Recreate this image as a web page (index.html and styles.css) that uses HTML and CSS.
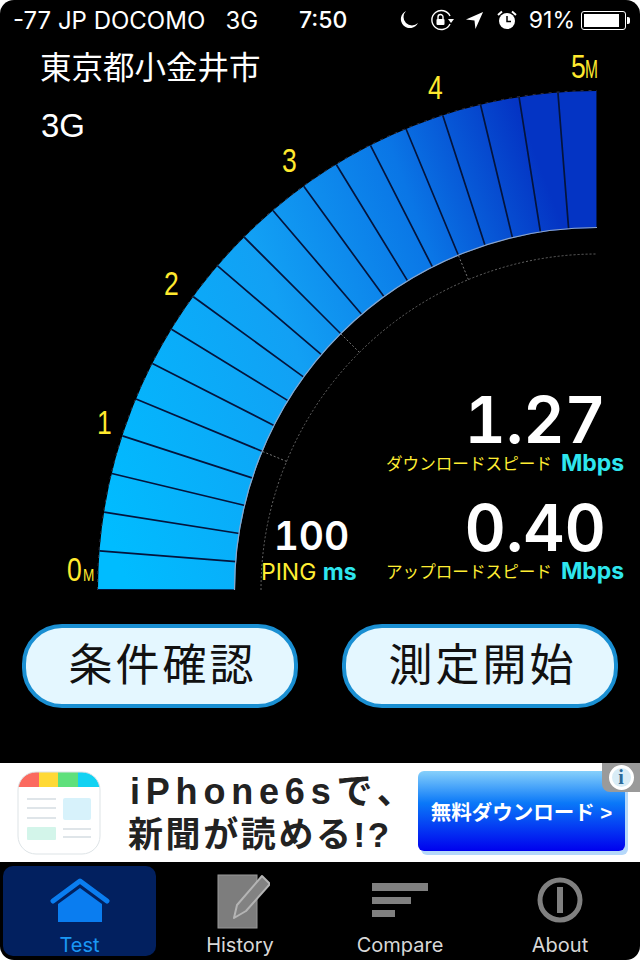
FILE: index.html
```html
<!DOCTYPE html>
<html>
<head>
  <title>Speed Test</title>
  <link rel="stylesheet" href="styles.css">
</head>
<body>
  <div class="screen">
    <div class="status-bar">
      <div class="carrier">-77 JP DOCOMO&nbsp;&nbsp;&nbsp;3G</div>
      <div class="clock">7:50</div>
      <div class="status-icons">
        <svg class="status-icon moon" viewBox="0 0 20 20"><path d="M7 1a9 9 0 1 0 12 12A8 8 0 0 1 7 1z" fill="#fff"/></svg>
        <svg class="status-icon rotate" viewBox="0 0 24 22"><path d="M20 7A9.5 9.5 0 1 0 20 15" fill="none" stroke="#fff" stroke-width="1.4"/><path d="M18 10h6l-3 4z" fill="#fff"/><rect x="6.500" y="10" width="8" height="6" rx="1" fill="#fff"/><path d="M8 10V8a2.500 2.500 0 0 1 5 0v2" fill="none" stroke="#fff" stroke-width="1.400"/></svg>
        <svg class="status-icon arrow" viewBox="0 0 20 20"><path d="M19 1L1 9l9 1 1 9z" fill="#fff"/></svg>
        <svg class="status-icon alarm" viewBox="0 0 20 20"><circle cx="10" cy="11" r="8" fill="#fff"/><path d="M10 6v5.500h4" fill="none" stroke="#000" stroke-width="1.500"/><path d="M1 5l4-3.500M19 5l-4-3.500" stroke="#fff" stroke-width="2"/></svg>
        <span class="battery-text">91%</span>
        <div class="battery"><div class="battery-fill"></div></div>
        <div class="battery-tip"></div>
      </div>
    </div>

    <div class="main">
      <svg class="gauge" viewBox="0 40 640 560">
        <defs>
          <linearGradient id="band" gradientUnits="userSpaceOnUse" x1="110" y1="540" x2="610" y2="350">
            <stop offset="0" stop-color="#00bcff"/>
            <stop offset="0.45" stop-color="#12a0f4"/>
            <stop offset="0.75" stop-color="#0a76e6"/>
            <stop offset="1" stop-color="#0434c4"/>
          </linearGradient>
        </defs>
        <path d="M166.500 590A430.500 430.500 0 0 1 597 159.500" fill="none" stroke="url(#band)" stroke-width="137"/>
        <path d="M166.500 590A430.500 430.500 0 0 1 597 159.500" pathLength="20" fill="none" stroke="#04143c" stroke-width="137" stroke-dasharray="0.05 0.95" stroke-dashoffset="-0.975"/>
        <path d="M234.500 590A362.500 362.500 0 0 1 597 227.500" fill="none" stroke="#8fa6c8" stroke-width="1.200"/>
        <path d="M261 590A336 336 0 0 1 597 254" fill="none" stroke="#666" stroke-width="1" stroke-dasharray="2 2"/>
        <path d="M97.500 590A499.500 499.500 0 0 1 597 90.500" fill="none" stroke="#334" stroke-width="1" stroke-dasharray="3 5"/>
        <path d="M262.600 451.500L286.600 461.400M341 334L359.400 352.400M458.500 255.600L468.400 279.600" stroke="#777" stroke-width="1" stroke-dasharray="2 2"/>
        <g class="gauge-labels">
          <text transform="translate(67 581) scale(.78 1)">0</text>
          <text class="unit" transform="translate(83 581) scale(.8 1)">M</text>
          <text transform="translate(97 434) scale(.78 1)">1</text>
          <text transform="translate(164 295) scale(.78 1)">2</text>
          <text transform="translate(282 172) scale(.78 1)">3</text>
          <text transform="translate(428 99) scale(.78 1)">4</text>
          <text transform="translate(571 78) scale(.78 1)">5</text>
          <text class="unit-large" transform="translate(585 78) scale(.62 1)">M</text>
        </g>
      </svg>

      <div class="location">
        <div class="location-line">東京都小金井市</div>
        <div class="location-line location-network">3G</div>
      </div>

      <div class="readouts">
        <div class="ping">
          <div class="ping-value">100</div>
          <div class="ping-label">PING <b>ms</b></div>
        </div>
        <div class="speeds">
          <div class="speed">
            <div class="speed-value">1.27</div>
            <div class="speed-label"><span>ダウンロードスピード</span><b>Mbps</b></div>
          </div>
          <div class="speed">
            <div class="speed-value">0.40</div>
            <div class="speed-label"><span>アップロードスピード</span><b>Mbps</b></div>
          </div>
        </div>
      </div>

      <div class="buttons">
        <div class="big-button">条件確認</div>
        <div class="big-button">測定開始</div>
      </div>
    </div>

    <div class="ad">
      <svg class="ad-icon" viewBox="0 0 84 84">
        <clipPath id="icon-clip"><rect x="1" y="1" width="82" height="82" rx="18"/></clipPath>
        <g clip-path="url(#icon-clip)">
          <rect width="84" height="84" fill="#fff"/>
          <rect x="0" y="0" width="22" height="16" fill="#fb6a5f"/>
          <rect x="22" y="0" width="19" height="16" fill="#ffd935"/>
          <rect x="41" y="0" width="20" height="16" fill="#5fe07c"/>
          <rect x="61" y="0" width="23" height="16" fill="#12d2f2"/>
          <rect x="46" y="27" width="28" height="22" rx="2" fill="#d7f2fb"/>
          <rect x="10" y="56" width="29" height="13" rx="1" fill="#d3f5ea"/>
          <path d="M10 28h29M10 37h29M10 47h29M46 58h28M46 66h28" stroke="#d5dde2" stroke-width="1.500"/>
        </g>
        <rect x="1" y="1" width="82" height="82" rx="18" fill="none" stroke="#dde3e6"/>
      </svg>
      <div class="ad-copy">
        <div class="ad-title">iPhone6sで、</div>
        <div class="ad-sub">新聞が読める!?</div>
      </div>
      <div class="ad-button">無料ダウンロード &gt;</div>
      <div class="ad-info"><span class="ad-info-dot">i</span></div>
    </div>

    <div class="tabs">
      <div class="tab active">
        <svg class="tab-icon" viewBox="0 0 60 56"><path d="M8 30L30 14l22 16v18H8z" fill="#0a7df0"/><path d="M3 27L30 7l27 20" fill="none" stroke="#0a7df0" stroke-width="5" stroke-linecap="round" stroke-linejoin="round"/></svg>
        <div class="tab-label">Test</div>
      </div>
      <div class="tab">
        <svg class="tab-icon" viewBox="0 0 60 56"><rect x="8" y="1" width="39" height="53" fill="#7d7d7d" stroke="#999" stroke-width="1"/><path d="M52 2L60 10 36 37 24 44 27 31z" fill="#828282" stroke="#b4b4b4" stroke-width="2" stroke-linejoin="round"/></svg>
        <div class="tab-label">History</div>
      </div>
      <div class="tab">
        <svg class="tab-icon" viewBox="0 0 60 56"><path d="M2 9h56v8H2zM2 23h39v7H2zM2 36h23v7H2z" fill="#808080"/></svg>
        <div class="tab-label">Compare</div>
      </div>
      <div class="tab">
        <svg class="tab-icon" viewBox="0 0 60 56"><circle cx="30" cy="26" r="20" fill="none" stroke="#808080" stroke-width="5"/><rect x="27" y="13" width="6" height="26" fill="#808080"/></svg>
        <div class="tab-label">About</div>
      </div>
    </div>
  </div>
</body>
</html>
```

FILE: styles.css
```css
body {
  margin: 0;
  background: #fff;
  font-family: "Liberation Sans", "Noto Sans CJK JP", sans-serif;
}
b {
  font-weight: 700;
}
.screen {
  width: 640px;
  height: 960px;
  background: #000;
  border-radius: 14px;
  overflow: hidden;
  display: flex;
  flex-direction: column;
  color: #fff;
}

.status-bar {
  height: 40px;
  display: flex;
  align-items: center;
  font-family: Inter, "Liberation Sans", sans-serif;
  font-size: 23px;
}
.carrier {
  width: 286px;
  padding-left: 13px;
  white-space: nowrap;
  font-size: 24px;
}
.clock {
  font-size: 23px;
  font-weight: 500;
}
.status-icons {
  margin-left: auto;
  padding-right: 10px;
  display: flex;
  align-items: center;
}
.status-icon {
  display: block;
}
.moon {
  width: 20px;
  height: 20px;
  margin-right: 10px;
}
.rotate {
  width: 26px;
  height: 22px;
  margin-right: 10px;
}
.arrow {
  width: 19px;
  height: 19px;
  margin-right: 13px;
}
.alarm {
  width: 20px;
  height: 20px;
  margin-right: 12px;
}
.battery-text {
  margin-right: 6px;
}
.battery {
  width: 45px;
  height: 19px;
  box-sizing: border-box;
  border: 1px solid #fff;
  border-radius: 3px;
  padding: 2px;
}
.battery-fill {
  width: 91%;
  height: 100%;
  background: #fff;
}
.battery-tip {
  width: 3px;
  height: 7px;
  margin-left: 1px;
  background: #fff;
  border-radius: 0 2px 2px 0;
}

.main {
  position: relative;
  height: 723px;
}
.gauge {
  position: absolute;
  left: 0;
  top: 0;
  width: 640px;
  height: 560px;
}
.gauge-labels {
  fill: #ffe92e;
  font-family: "Liberation Sans", sans-serif;
  font-size: 34px;
}
.gauge-labels .unit {
  font-size: 17px;
}
.gauge-labels .unit-large {
  font-size: 25px;
}

.location {
  position: relative;
  padding-left: 40px;
  height: 352px;
}
.location-line {
  height: 58px;
  line-height: 56px;
  font-size: 31.500px;
}
.location-network {
  padding-left: 1px;
  font-size: 33px;
}

.readouts {
  position: relative;
  display: flex;
  height: 201px;
}
.ping {
  width: 386px;
  box-sizing: border-box;
  padding: 123px 0 0 261px;
}
.ping-value {
  width: 101px;
  text-align: center;
  font-family: Inter, sans-serif;
  font-size: 39px;
  font-weight: 600;
  font-variant-numeric: tabular-nums;
  line-height: 42px;
}
.ping-label {
  color: #ffee33;
  font-family: Inter, sans-serif;
  font-size: 23px;
  line-height: 30px;
  white-space: nowrap;
}
.ping-label b {
  color: #2ee6ee;
}
.speed {
  height: 108px;
}
.speed-value {
  width: 220px;
  text-align: right;
  font-family: Inter, sans-serif;
  font-size: 64px;
  font-weight: 600;
  font-variant-numeric: tabular-nums;
  line-height: 56px;
}
.speed-label {
  display: flex;
  align-items: center;
  height: 30px;
  color: #ffee33;
  font-size: 16.600px;
  white-space: nowrap;
}
.speed-label b {
  margin-left: 9px;
  color: #2ee6ee;
  font-family: Inter, sans-serif;
  font-size: 23px;
}

.buttons {
  position: relative;
  display: flex;
  gap: 44px;
  padding: 31px 0 0 22px;
}
.big-button {
  width: 276px;
  height: 84px;
  box-sizing: border-box;
  border: 4px solid #1a8fd2;
  border-radius: 40px;
  padding-left: 5px;
  background: #e4f7ff;
  color: #111;
  font-size: 44px;
  letter-spacing: 3px;
  text-align: center;
  line-height: 76px;
}

.ad {
  position: relative;
  height: 99px;
  background: #fff;
  display: flex;
  align-items: center;
  color: #222;
}
.ad-icon {
  width: 84px;
  height: 84px;
  margin-left: 17px;
}
.ad-copy {
  width: 317px;
  padding-left: 27px;
  box-sizing: border-box;
  font-weight: 700;
  white-space: nowrap;
}
.ad-title {
  padding-left: 2px;
  font-size: 36px;
  letter-spacing: 5.800px;
  line-height: 44px;
}
.ad-sub {
  font-size: 35px;
  letter-spacing: 2.600px;
  line-height: 42px;
}
.ad-button {
  width: 207px;
  height: 80px;
  margin-bottom: 3px;
  border-radius: 6px;
  background: linear-gradient(#86d0fb, #0a78f8 40%, #0000ee);
  box-shadow: 3px 4px 0 #b5d8fa;
  color: #fff;
  font-size: 20.500px;
  font-weight: 700;
  text-align: center;
  line-height: 84px;
  white-space: nowrap;
}
.ad-info {
  position: absolute;
  right: 0;
  top: 0;
  width: 38px;
  height: 29px;
  background: #9a9a9a;
  border-bottom-left-radius: 8px;
  display: flex;
  align-items: center;
  justify-content: center;
}
.ad-info-dot {
  width: 25px;
  height: 25px;
  box-sizing: border-box;
  border: 3px solid #fff;
  border-radius: 50%;
  background: #d8ecf6;
  color: #2a6a9a;
  font-family: "Liberation Serif", serif;
  font-size: 20px;
  font-weight: 700;
  line-height: 19px;
  text-align: center;
}

.tabs {
  height: 98px;
  display: flex;
}
.tab {
  width: 160px;
  height: 90px;
  margin-top: 4px;
  display: flex;
  flex-direction: column;
  align-items: center;
  color: #d8d8d8;
}
.tab.active {
  width: 153px;
  margin: 4px 4px 0 3px;
  background: #02205f;
  border-radius: 10px;
  color: #1a98f5;
}
.tab-icon {
  flex-shrink: 0;
  width: 60px;
  height: 56px;
  margin-top: 8px;
}
.tab-label {
  margin-top: 4px;
  font-family: Inter, "Liberation Sans", sans-serif;
  font-size: 20px;
  line-height: 22px;
}
```
